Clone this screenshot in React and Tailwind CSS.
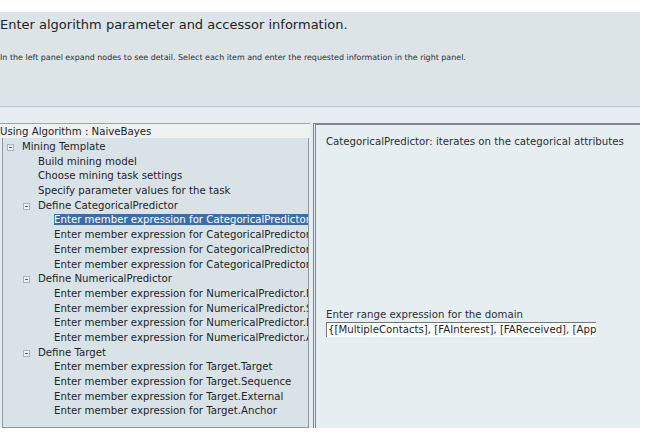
import React from "react";

const rows = [
  { t: "Mining Template", lvl: 0, box: true },
  { t: "Build mining model", lvl: 1 },
  { t: "Choose mining task settings", lvl: 1 },
  { t: "Specify parameter values for the task", lvl: 1 },
  { t: "Define CategoricalPredictor", lvl: 1, box: true },
  { t: "Enter member expression for CategoricalPredictor.Target", lvl: 2, sel: true },
  { t: "Enter member expression for CategoricalPredictor.Sequence", lvl: 2 },
  { t: "Enter member expression for CategoricalPredictor.External", lvl: 2 },
  { t: "Enter member expression for CategoricalPredictor.Anchor", lvl: 2 },
  { t: "Define NumericalPredictor", lvl: 1, box: true },
  { t: "Enter member expression for NumericalPredictor.Numerical", lvl: 2 },
  { t: "Enter member expression for NumericalPredictor.Sequence", lvl: 2 },
  { t: "Enter member expression for NumericalPredictor.External", lvl: 2 },
  { t: "Enter member expression for NumericalPredictor.Anchor", lvl: 2 },
  { t: "Define Target", lvl: 1, box: true },
  { t: "Enter member expression for Target.Target", lvl: 2 },
  { t: "Enter member expression for Target.Sequence", lvl: 2 },
  { t: "Enter member expression for Target.External", lvl: 2 },
  { t: "Enter member expression for Target.Anchor", lvl: 2 },
];

const indent = ["pl-[19px]", "pl-[35px]", "pl-[51px]"];
const boxAt = ["left-[4px]", "left-[20px]", "left-[36px]"];

function TreeRow({ row }) {
  return (
    <div className={`relative h-[14.7px] leading-[14.7px] whitespace-nowrap ${indent[row.lvl]}`}>
      {row.box && (
        <span className={`absolute top-[4px] ${boxAt[row.lvl]} w-[7px] h-[7px] border border-[#a9b4b9] bg-[#eef2f4] flex items-center justify-center`}>
          <span className="w-[3px] h-px bg-[#55606a]" />
        </span>
      )}
      <span className={row.sel ? "bg-[#3a6ea8] text-white pr-[20px]" : "text-[#1e2326]"}>{row.t}</span>
    </div>
  );
}

export default function App() {
  return (
    <div className="w-[652px] h-[434px] bg-white overflow-hidden font-['DejaVu_Sans',sans-serif]">
      <div className="mt-[12px] w-[640px] h-[95px] bg-[#dce4e7] border-b border-[#bcc6ca]">
        <div className="pt-[5px] text-[13px] leading-[16px] text-[#202427]">
          Enter algorithm parameter and accessor information.
        </div>
        <div className="mt-[20px] text-[7.95px] leading-[9px] text-[#2a2f33]">
          In the left panel expand nodes to see detail. Select each item and enter the requested information in the right panel.
        </div>
      </div>
      <div className="w-[640px] h-[16px] bg-[#e6ecef]" />
      <div className="flex w-[640px] h-[305px]">
        <div className="w-[310px] flex flex-col bg-[#e6ecef]">
          <div className="h-[15px] bg-[#eef2f3] border-t border-[#9aa4a9] text-[10.2px] leading-[15px] text-[#1e2326] whitespace-nowrap">
            Using Algorithm : NaiveBayes
          </div>
          <div className="flex-1 ml-[2px] w-[307px] bg-[#d9e3e7] border-x border-b border-[#8d979c] overflow-hidden text-[10.2px] pt-[2px]">
            {rows.map((r, i) => (
              <TreeRow key={i} row={r} />
            ))}
          </div>
        </div>
        <div className="w-[3px] bg-[#e6ecef]" />
        <div className="flex-1 bg-[#e7eef1] border-l-[3px] border-t-[2px] border-[#7d868b] border-double text-[10.2px] text-[#2a2f33]">
          <div className="pl-[10px] pt-[10px] leading-[13px]">
            CategoricalPredictor: iterates on the categorical attributes
          </div>
          <div className="pl-[10px] mt-[160px] leading-[13px]">Enter range expression for the domain</div>
          <div className="ml-[10px] mt-[1px] w-[270px] h-[15px] bg-white border-t border-l border-[#6f787d] leading-[14px] pl-[1px] overflow-hidden whitespace-nowrap text-[#1e2326]">
            {"{[MultipleContacts], [FAInterest], [FAReceived], [AppliedForAid]}"}
          </div>
        </div>
      </div>
    </div>
  );
}
